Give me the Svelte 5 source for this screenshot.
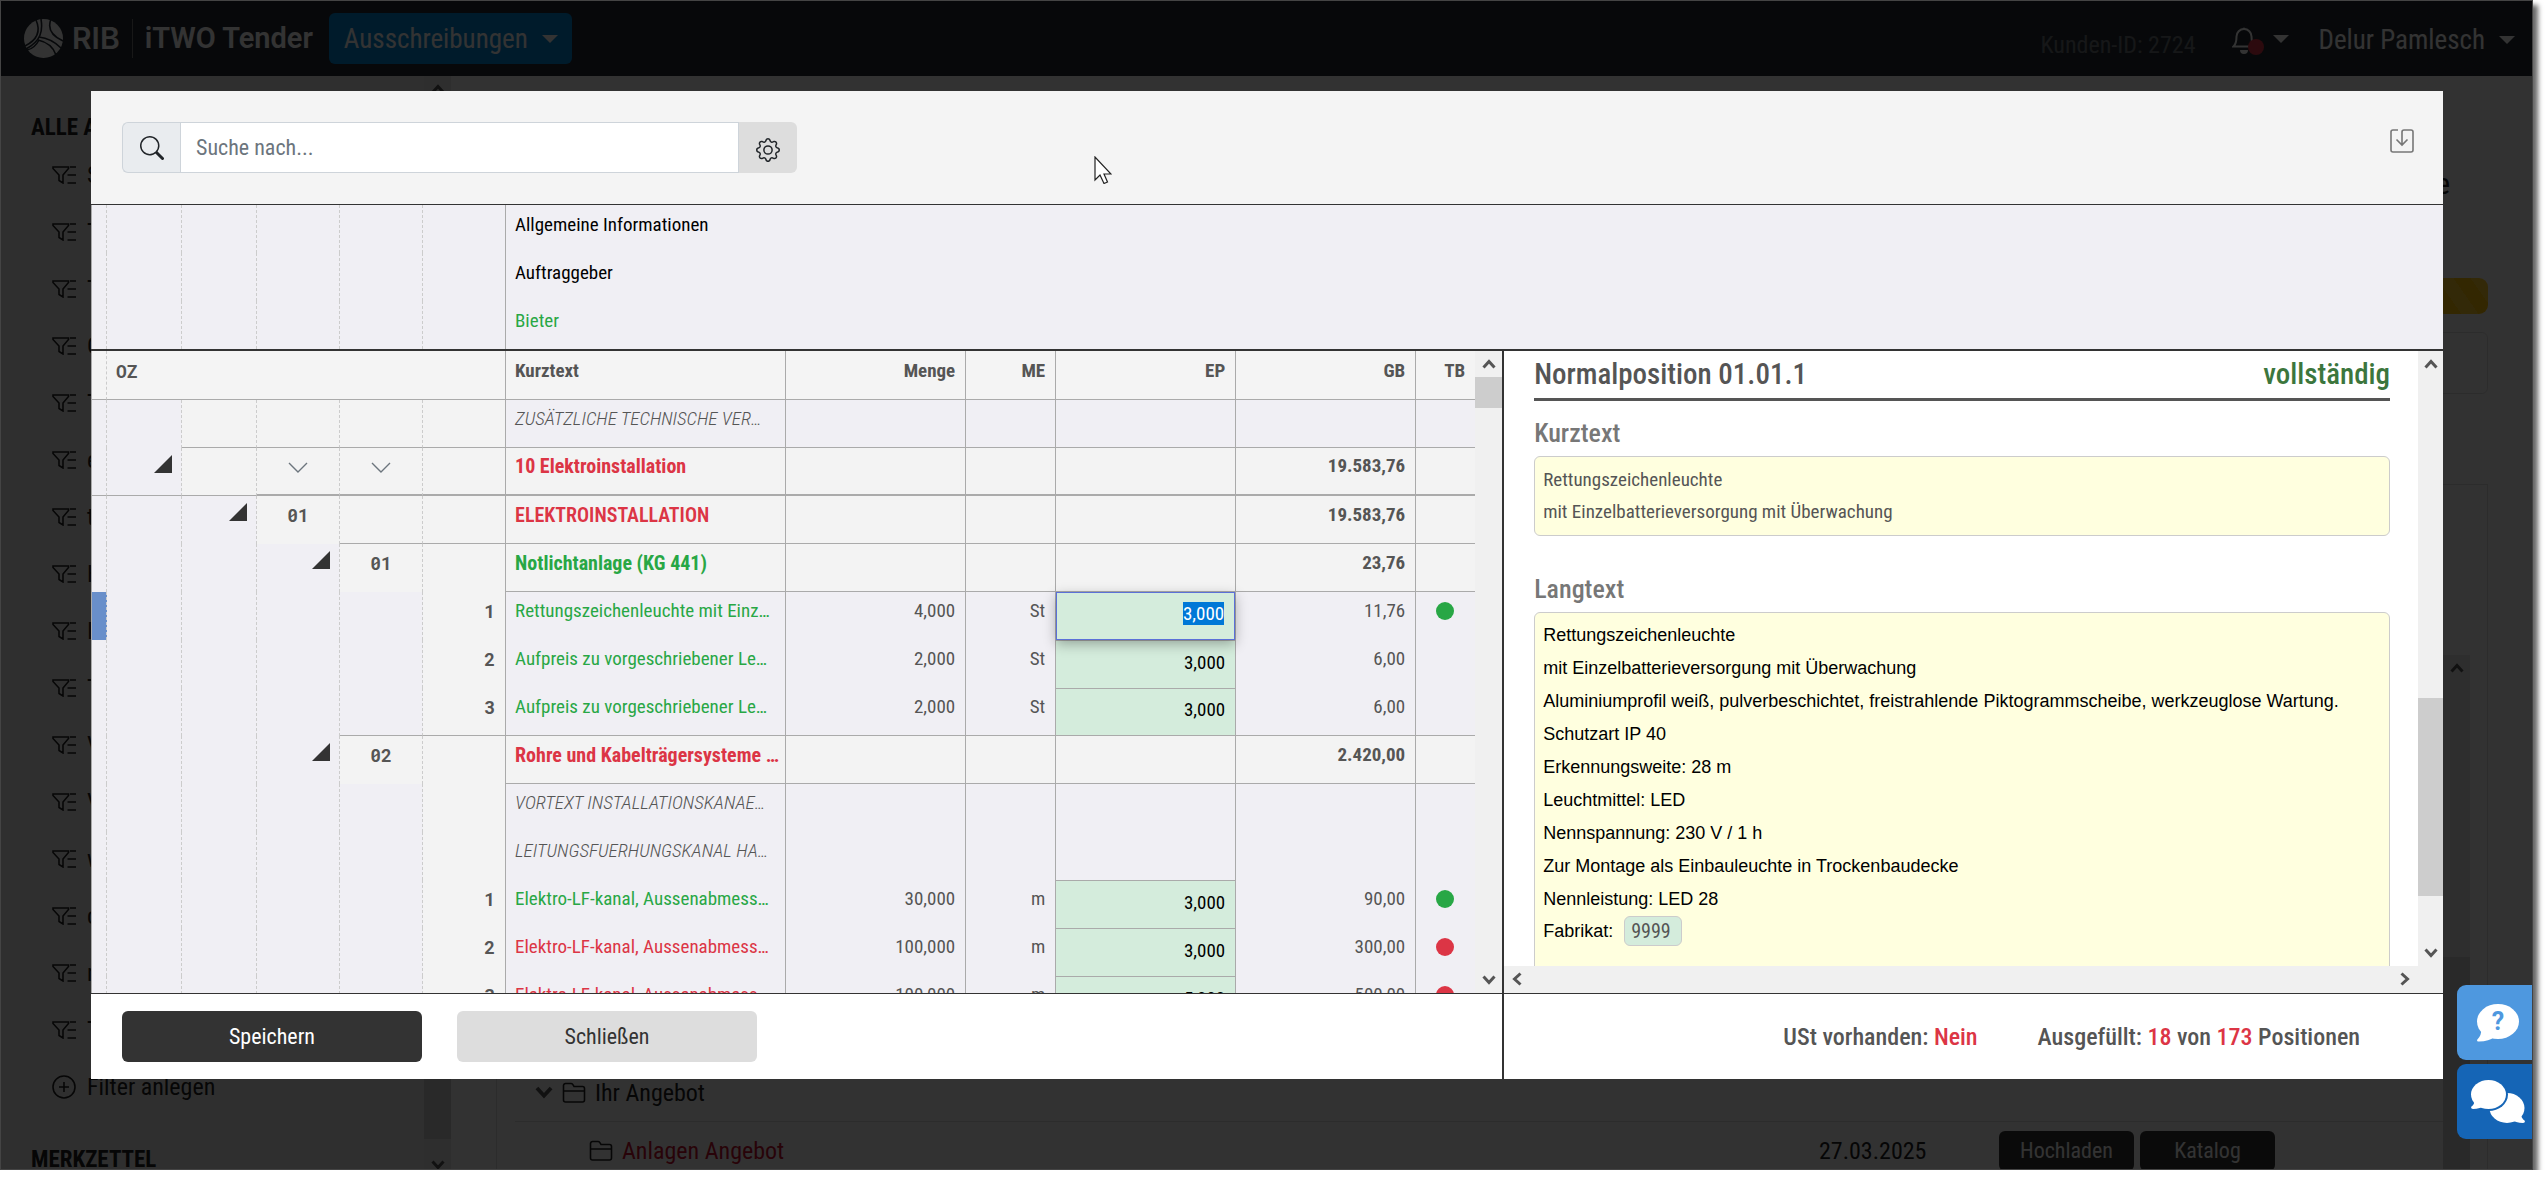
<script>
    import { onMount } from 'svelte';

    let search = $state('');
    let fabrikat = $state('9999');
    let activeInput = $state(null);

    const filters = ['S', 'T', 'T', 'G', 'T', 'e', 't', 'H', 'I', 'T', 'V', 'V', 'w', 'c', 'r', 'T'];

    const infoRows = [
        { text: 'Allgemeine Informationen' },
        { text: 'Auftraggeber' },
        { text: 'Bieter', done: true },
    ];

    // level: depth of the title, item: position with a price, note: free text
    let rows = $state([
        { type: 'note', level: 1, text: 'ZUSÄTZLICHE TECHNISCHE VER…', line: 2 },
        { type: 'title', level: 1, text: '10 Elektroinstallation', state: 'open', gb: '19.583,76', line: 0 },
        { type: 'title', level: 2, oz: '01', text: 'ELEKTROINSTALLATION', state: 'open', gb: '19.583,76', line: 4 },
        { type: 'title', level: 3, oz: '01', text: 'Notlichtanlage (KG 441)', state: 'done', gb: '23,76', line: 6 },
        { type: 'item', level: 4, oz: '1', text: 'Rettungszeichenleuchte mit Einz…', state: 'done', menge: '4,000', me: 'St', ep: '3,000', gb: '11,76', dot: 'done', active: true },
        { type: 'item', level: 4, oz: '2', text: 'Aufpreis zu vorgeschriebener Le…', state: 'done', menge: '2,000', me: 'St', ep: '3,000', gb: '6,00' },
        { type: 'item', level: 4, oz: '3', text: 'Aufpreis zu vorgeschriebener Le…', state: 'done', menge: '2,000', me: 'St', ep: '3,000', gb: '6,00', line: 4 },
        { type: 'title', level: 3, oz: '02', text: 'Rohre und Kabelträgersysteme …', state: 'open', gb: '2.420,00', line: 6 },
        { type: 'note', level: 4, text: 'VORTEXT INSTALLATIONSKANAE…' },
        { type: 'note', level: 4, text: 'LEITUNGSFUERHUNGSKANAL HA…' },
        { type: 'item', level: 4, oz: '1', text: 'Elektro-LF-kanal, Aussenabmess…', state: 'done', menge: '30,000', me: 'm', ep: '3,000', gb: '90,00', dot: 'done' },
        { type: 'item', level: 4, oz: '2', text: 'Elektro-LF-kanal, Aussenabmess…', state: 'open', menge: '100,000', me: 'm', ep: '3,000', gb: '300,00', dot: 'open' },
        { type: 'item', level: 4, oz: '3', text: 'Elektro-LF-kanal, Aussenabmess…', state: 'open', menge: '100,000', me: 'm', ep: '5,000', gb: '500,00', dot: 'open' },
    ]);

    const langtext = [
        'Rettungszeichenleuchte',
        'mit Einzelbatterieversorgung mit Überwachung',
        'Aluminiumprofil weiß, pulverbeschichtet, freistrahlende Piktogrammscheibe, werkzeuglose Wartung.',
        'Schutzart IP 40',
        'Erkennungsweite: 28 m',
        'Leuchtmittel: LED',
        'Nennspannung: 230 V / 1 h',
        'Zur Montage als Einbauleuchte in Trockenbaudecke',
        'Nennleistung: LED 28',
    ];

    function keepActive(node, active) {
        if (active) activeInput = node;
    }

    onMount(() => {
        activeInput?.focus();
        activeInput?.select();
    });
</script>

{#snippet chevron(dir)}
    <svg class="scroll-chevron {dir}" viewBox="0 0 14 10" aria-hidden="true"><path d="M1.5 8.5 7 2.5l5.5 6" /></svg>
{/snippet}

{#snippet scrollbar(before, thumb, after)}
    <div class="scrollbar">
        <button class="scroll-button" aria-label="Nach oben">{@render chevron('up')}</button>
        <div style="flex: {before} 0 0"></div>
        <div class="thumb" style="flex: {thumb} 0 0"></div>
        <div style="flex: {after} 0 0"></div>
        <button class="scroll-button" aria-label="Nach unten">{@render chevron('down')}</button>
    </div>
{/snippet}

{#snippet folder()}
    <svg class="folder" viewBox="0 0 24 21" aria-hidden="true">
        <path d="M1.5 18V3.5a2 2 0 0 1 2-2H9a2 2 0 0 1 1.700.9L12 4.500h8.500a2 2 0 0 1 2 2V18a2 2 0 0 1-2 2h-17a2 2 0 0 1-2-2zM1.500 9h21" />
    </svg>
{/snippet}

{#snippet gridColumns()}
    <colgroup>
        <col class="w-marker" /><col class="w-level" /><col class="w-level" />
        <col class="w-oz" /><col class="w-oz" /><col class="w-oz" /><col />
        <col class="w-wide" /><col class="w-me" /><col class="w-wide" /><col class="w-wide" /><col class="w-tb" />
    </colgroup>
{/snippet}

<div class="window">
    <header class="topbar">
        <svg class="logo" viewBox="0 0 39 39" aria-hidden="true">
            <circle cx="19.5" cy="19.5" r="19.5" fill="#fff" />
            <g fill="none" stroke="#232c35" stroke-width="1.6">
                <path d="M12 1c4 9 3 19-11 26" />
                <path d="M17 0c2 12 0 22-15 30" />
                <path d="M27 0c-4 10 1 17 12 22" />
                <path d="M15 18c9 1 17 6 22 11" />
                <path d="M14 21c9 2 15 6 18 15" />
                <path d="M3 31c5-1 9-4 12-10" />
            </g>
        </svg>
        <span class="brand">RIB</span>
        <span class="product">iTWO Tender</span>
        <button class="area-menu">Ausschreibungen <span class="caret"></span></button>
        <span class="customer">Kunden-ID: 2724</span>
        <button class="bell" aria-label="Benachrichtigungen">
            <svg viewBox="0 0 24 28" aria-hidden="true">
                <path d="M1.5 20.5h21c-2-2-3-5-3-10a7.500 7.500 0 0 0-15 0c0 5-1 8-3 10z" fill="none" stroke="#fff" stroke-width="2" />
                <path d="M8 24h8a4 4 0 0 1-8 0zM10.500 3a1.500 1.500 0 1 1 3 0z" fill="#fff" />
            </svg>
            <span class="badge"></span>
        </button>
        <span class="caret"></span>
        <button class="user">Delur Pamlesch <span class="caret"></span></button>
    </header>

    <div class="page">
        <nav class="sidebar">
            <div class="sidebar-content">
                <h2>ALLE A</h2>
                <ul>
                    {#each filters as name}
                        <li>
                            <svg class="funnel" viewBox="0 0 24 18" aria-hidden="true"><path d="M1 1h15.500v1.500L11 9v8l-4-2.500V9L1 2.500zM18 1h6M15.500 9H24M15.500 17H24" /></svg>
                            {name}
                        </li>
                    {/each}
                    <li>
                        <svg class="plus" viewBox="0 0 24 24" aria-hidden="true"><circle cx="12" cy="12" r="11" /><path d="M12 7v10M7 12h10" /></svg>
                        Filter anlegen
                    </li>
                </ul>
                <h2 class="notes">MERKZETTEL</h2>
            </div>
            {@render scrollbar(50, 965, 13)}
        </nav>

        <main>
            <h1>e</h1>
            <div class="progress"></div>
            <div class="card"></div>
            <div class="card files">
                <div class="tree">
                    <div class="tree-row">
                        <div class="tree-name">{@render chevron('down')} {@render folder()} Ihr Angebot</div>
                    </div>
                    <div class="tree-row">
                        <a class="tree-name nested" href="#anlagen">{@render folder()} Anlagen Angebot</a>
                        <span class="date">27.03.2025</span>
                        <div class="tree-actions">
                            <button>Hochladen</button>
                            <button>Katalog</button>
                        </div>
                    </div>
                </div>
                {@render scrollbar(276, 217, 0)}
            </div>
        </main>
    </div>

    <div class="backdrop">
        <div class="modal" role="dialog" aria-label="Leistungsverzeichnis">
            <header class="modal-header">
                <div class="search">
                    <label for="search" aria-label="Suche">
                        <svg viewBox="0 0 16 16" aria-hidden="true"><path d="M11.742 10.344a6.500 6.500 0 1 0-1.397 1.398h-.001q.044.060.098.115l3.850 3.850a1 1 0 0 0 1.415-1.414l-3.850-3.850a1 1 0 0 0-.115-.1zM12 6.500a5.500 5.500 0 1 1-11 0 5.500 5.500 0 0 1 11 0" /></svg>
                    </label>
                    <input id="search" type="text" placeholder="Suche nach..." bind:value={search} />
                    <button aria-label="Sucheinstellungen">
                        <svg viewBox="0 0 16 16" aria-hidden="true">
                            <path d="M8 4.754a3.246 3.246 0 1 0 0 6.492 3.246 3.246 0 0 0 0-6.492M5.754 8a2.246 2.246 0 1 1 4.492 0 2.246 2.246 0 0 1-4.492 0" />
                            <path d="M9.796 1.343c-.527-1.790-3.065-1.790-3.592 0l-.094.319a.873.873 0 0 1-1.255.520l-.292-.160c-1.640-.892-3.433.902-2.540 2.541l.159.292a.873.873 0 0 1-.520 1.255l-.319.094c-1.790.527-1.790 3.065 0 3.592l.319.094a.873.873 0 0 1 .520 1.255l-.160.292c-.892 1.640.901 3.434 2.541 2.540l.292-.159a.873.873 0 0 1 1.255.520l.094.319c.527 1.790 3.065 1.790 3.592 0l.094-.319a.873.873 0 0 1 1.255-.520l.292.160c1.640.893 3.434-.902 2.540-2.541l-.159-.292a.873.873 0 0 1 .520-1.255l.319-.094c1.790-.527 1.790-3.065 0-3.592l-.319-.094a.873.873 0 0 1-.520-1.255l.160-.292c.893-1.640-.902-3.433-2.541-2.540l-.292.159a.873.873 0 0 1-1.255-.520zm-2.633.283c.246-.835 1.428-.835 1.674 0l.094.319a1.873 1.873 0 0 0 2.693 1.115l.291-.160c.764-.415 1.600.420 1.184 1.185l-.159.292a1.873 1.873 0 0 0 1.116 2.692l.318.094c.835.246.835 1.428 0 1.674l-.319.094a1.873 1.873 0 0 0-1.115 2.693l.160.291c.415.764-.420 1.600-1.185 1.184l-.291-.159a1.873 1.873 0 0 0-2.693 1.116l-.094.318c-.246.835-1.428.835-1.674 0l-.094-.319a1.873 1.873 0 0 0-2.692-1.115l-.292.160c-.764.415-1.600-.420-1.184-1.185l.159-.291A1.873 1.873 0 0 0 1.945 8.930l-.319-.094c-.835-.246-.835-1.428 0-1.674l.319-.094A1.873 1.873 0 0 0 3.060 4.377l-.160-.292c-.415-.764.420-1.600 1.185-1.184l.292.159a1.873 1.873 0 0 0 2.692-1.115z" />
                        </svg>
                    </button>
                </div>
                <button class="download" aria-label="Herunterladen">
                    <svg viewBox="0 0 24 24" aria-hidden="true">
                        <path d="M8 1H3a2 2 0 0 0-2 2v18a2 2 0 0 0 2 2h18a2 2 0 0 0 2-2V3a2 2 0 0 0-2-2h-7a2 2 0 0 0-2 2v13M6.500 10.500 12 16l5.500-5.500" />
                    </svg>
                </button>
                <svg class="pointer" viewBox="0 0 18 28" aria-hidden="true"><path d="M1 1v23l5-5 4 8.500 3.500-1.500-3.500-8H17z" fill="#fff" stroke="#222" stroke-width="1.2" /></svg>
            </header>

            <table class="info">
                <colgroup>
                    <col class="w-marker" /><col class="w-level" /><col class="w-level" />
                    <col class="w-oz" /><col class="w-oz" /><col class="w-oz" /><col />
                </colgroup>
                <tbody>
                    {#each infoRows as row}
                        <tr>
                            <td class="marker"></td>
                            <td class="guide"></td><td class="guide"></td><td class="guide"></td><td class="guide"></td>
                            <td></td>
                            <td class="info-text" class:done={row.done}>{row.text}</td>
                        </tr>
                    {/each}
                </tbody>
            </table>

            <div class="panes">
                <section class="positions">
                    <div class="table-clip">
                        <table>
                            {@render gridColumns()}
                            <thead>
                                <tr>
                                    <th class="marker"></th>
                                    <th class="mono" colspan="5">OZ</th>
                                    <th>Kurztext</th>
                                    <th class="num">Menge</th>
                                    <th class="num">ME</th>
                                    <th class="num">EP</th>
                                    <th class="num">GB</th>
                                    <th class="num last">TB</th>
                                </tr>
                            </thead>
                            <tbody>
                                {#each rows as row, i}
                                    <tr class={row.type} class:heavy={i === 1}>
                                        <td class="marker" class:current={row.active} class:line={row.line === 0}></td>
                                        {#each [1, 2, 3, 4, 5] as col}
                                            <td
                                                class="oz"
                                                class:guide={col < 5}
                                                class:raised={col > row.level}
                                                class:line={row.line !== undefined && col >= row.line}
                                                class:thin={i === 1 && col < 3}
                                                class:number={row.type === 'item' && col === 5}
                                                class:toggle={row.type === 'title' && col === row.level}
                                            >
                                                {#if row.type === 'title' && col === row.level}
                                                    <button class="collapse" aria-label="Zuklappen"></button>
                                                {:else if i === 1 && (col === 3 || col === 4)}
                                                    <button class="expand-all" aria-label="Ebene aufklappen">
                                                        <svg viewBox="0 0 20 11" aria-hidden="true"><path d="M1 1l9 9 9-9" /></svg>
                                                    </button>
                                                {:else if row.oz && col === row.level + 1}
                                                    {row.oz}
                                                {/if}
                                            </td>
                                        {/each}
                                        <td class="text {row.state ?? ''}" class:line={row.line !== undefined} class:semi={i === 2}>{row.text}</td>
                                        <td class="num" class:line={row.line !== undefined}>{row.menge ?? ''}</td>
                                        <td class="num" class:line={row.line !== undefined}>{row.me ?? ''}</td>
                                        <td class="num ep" class:line={row.line !== undefined}>
                                            {#if row.ep}
                                                <input
                                                    type="text"
                                                    class:active={row.active}
                                                    aria-label="EP {row.text}"
                                                    bind:value={row.ep}
                                                    use:keepActive={row.active}
                                                />
                                            {/if}
                                        </td>
                                        <td class="num" class:line={row.line !== undefined}>{row.gb ?? ''}</td>
                                        <td class="last" class:line={row.line !== undefined}>
                                            {#if row.dot}<span class="dot {row.dot}"></span>{/if}
                                        </td>
                                    </tr>
                                {/each}
                            </tbody>
                        </table>
                    </div>
                    {@render scrollbar(0, 31, 559)}
                </section>

                <section class="details">
                    <div class="details-main">
                        <div class="details-content">
                            <div class="details-title">
                                <h2>Normalposition 01.01.1</h2>
                                <span>vollständig</span>
                            </div>
                            <h3>Kurztext</h3>
                            <div class="box">
                                Rettungszeichenleuchte<br />mit Einzelbatterieversorgung mit Überwachung
                            </div>
                            <h3 class="second">Langtext</h3>
                            <div class="box long">
                                {#each langtext as line}
                                    <p>{line}</p>
                                {/each}
                                <p class="field">
                                    <label for="fabrikat">Fabrikat:</label>
                                    <input id="fabrikat" type="text" bind:value={fabrikat} />
                                </p>
                            </div>
                        </div>
                        {@render scrollbar(321, 198, 44)}
                    </div>
                    <div class="scrollbar-x">
                        <button class="scroll-button" aria-label="Nach links">{@render chevron('left')}</button>
                        <button class="scroll-button" aria-label="Nach rechts">{@render chevron('right')}</button>
                    </div>
                </section>
            </div>

            <footer class="modal-footer">
                <div class="footer-actions">
                    <button class="save">Speichern</button>
                    <button class="close">Schließen</button>
                </div>
                <div class="footer-status">
                    <span>USt vorhanden: <b>Nein</b></span>
                    <span>Ausgefüllt: <b>18</b> von <b>173</b> Positionen</span>
                </div>
            </footer>
        </div>
    </div>

    <div class="help">
        <button aria-label="Hilfe">
            <svg width="42" height="38" viewBox="0 0 42 38">
                <ellipse cx="21" cy="17.5" rx="21" ry="17.5" fill="#fff" />
                <path d="M4 25q1 6-4 11 0 2 2 1.500 10 0 16-5z" fill="#fff" />
                <text x="21" y="26" text-anchor="middle">?</text>
            </svg>
        </button>
        <button class="chat" aria-label="Chat">
            <svg width="54" height="44" viewBox="0 0 54 44">
                <g fill="#fff">
                    <ellipse cx="36" cy="28" rx="17.5" ry="15" />
                    <path d="M50 34q0 4 4 7 0 2-2 2-7 0-13-4z" />
                </g>
                <ellipse cx="17.5" cy="14.5" rx="19.5" ry="16.5" fill="#1565b6" />
                <g fill="#fff">
                    <ellipse cx="17.5" cy="14.5" rx="17.5" ry="14.5" />
                    <path d="M3 21q1 3-3 6 0 2 2 2 7 0 13-4z" />
                </g>
            </svg>
        </button>
    </div>
</div>

<style>
    :global(body) {
        margin: 0;
        background: #fff;
        font-family: 'Roboto Condensed', Roboto, sans-serif;
        font-size: 24px;
    }

    * {
        box-sizing: border-box;
    }

    button,
    input {
        font: inherit;
        border: none;
        margin: 0;
        padding: 0;
        background: none;
        color: inherit;
    }

    h1,
    h2,
    h3,
    p,
    ul {
        margin: 0;
        padding: 0;
    }

    .window {
        position: relative;
        display: flex;
        flex-direction: column;
        height: calc(100vh - 15px);
        margin-right: 15px;
        border: 1px solid #444;
        background: #fafafa;
        box-shadow: 5px 5px 5px rgba(0, 0, 0, 0.6);
    }

    /* top bar */
    .topbar {
        display: flex;
        align-items: center;
        flex: none;
        height: 75px;
        padding: 0 17px 0 23px;
        background: #232c35;
        color: #fff;
    }

    .logo {
        width: 39px;
        height: 39px;
    }

    .brand {
        margin-left: 9px;
        padding-right: 12px;
        border-right: 1px solid #777;
        font: 600 30px/39px Inter, sans-serif;
    }

    .product {
        margin: 0 16px 0 12px;
        font: 600 29px/39px Roboto, sans-serif;
    }

    .area-menu {
        display: flex;
        align-items: center;
        gap: 14px;
        height: 51px;
        padding: 0 14px 0 15px;
        border-radius: 6px;
        background: #0087d7;
        font-size: 27px;
    }

    .caret {
        border: 8px solid transparent;
        border-top-color: currentColor;
        border-bottom: none;
    }

    .customer {
        margin-left: auto;
        padding-top: 12px;
        color: #70757a;
    }

    .bell {
        position: relative;
        display: flex;
        margin: 3px 17px 0 36px;
    }

    .bell svg {
        width: 24px;
        height: 28px;
    }

    .badge {
        position: absolute;
        right: -8px;
        bottom: -1px;
        width: 16px;
        height: 16px;
        border-radius: 50%;
        background: #dc3545;
    }

    .user {
        display: flex;
        align-items: center;
        gap: 14px;
        margin-left: 30px;
        padding-top: 3px;
        font-size: 27px;
    }

    /* page behind the dialog */
    .page {
        display: flex;
        flex: 1;
        min-height: 0;
        overflow: hidden;
        color: #222;
    }

    .sidebar {
        display: flex;
        flex: none;
        width: 450px;
        margin-bottom: -9px;
        background: #ebebeb;
        overflow: hidden;
    }

    .sidebar-content {
        flex: 1;
        overflow: hidden;
    }

    .sidebar h2 {
        margin: 40px 0 6px 30px;
        font-size: 23px;
        line-height: 24px;
    }

    .sidebar h2.notes {
        margin-top: 33px;
    }

    .sidebar ul {
        list-style: none;
        padding-left: 51px;
    }

    .sidebar li {
        display: flex;
        align-items: center;
        gap: 11px;
        height: 57px;
    }

    .funnel,
    .plus,
    .folder {
        flex: none;
        width: 24px;
        fill: none;
        stroke: #222;
        stroke-width: 1.6;
    }

    main {
        display: flex;
        flex: 1;
        flex-direction: column;
        min-width: 0;
        padding: 0 44px 0 45px;
    }

    h1 {
        margin: 88px 38px 0 0;
        font-size: 30px;
        line-height: 40px;
        font-weight: 400;
        text-align: right;
    }

    .progress {
        flex: none;
        height: 36px;
        margin-top: 74px;
        border-radius: 9px;
        background: repeating-linear-gradient(55deg, #ffc107 0 14px, #ffca2c 14px 28px);
    }

    .card {
        flex: none;
        height: 62px;
        margin-top: 18px;
        border: 1px solid #ddd;
        border-radius: 6px;
    }

    .card.files {
        display: flex;
        flex: 1;
        min-height: 0;
        margin: 90px 0 -11px;
        padding: 170px 17px 0 18px;
        border-bottom: none;
        border-radius: 0;
    }

    .card.files .scrollbar {
        margin-bottom: -20px;
    }

    .tree {
        display: flex;
        flex: 1;
        flex-direction: column;
        justify-content: flex-end;
    }

    .tree-row {
        display: grid;
        grid-template-columns: 1fr 180px 444px;
        align-items: center;
        height: 58px;
        border-bottom: 1px solid #ddd;
    }

    .tree-name {
        display: flex;
        align-items: center;
        gap: 9px;
        padding-left: 20px;
        color: #222;
        text-decoration: none;
    }

    .tree-name .scroll-chevron {
        width: 18px;
        height: 13px;
    }

    .tree-name.nested {
        padding-left: 74px;
        color: #c8102e;
    }

    .tree-actions {
        display: flex;
        gap: 6px;
    }

    .tree-actions button {
        width: 135px;
        height: 40px;
        border-radius: 6px;
        background: #333;
        color: #fff;
        font-size: 22px;
    }

    /* scroll bars */
    .scrollbar {
        display: flex;
        flex: none;
        flex-direction: column;
        width: 27px;
        background: #f0f0f0;
    }

    .sidebar .scrollbar,
    .files .scrollbar {
        background: #e6e6e6;
    }

    .scroll-button {
        display: flex;
        align-items: center;
        justify-content: center;
        flex: none;
        width: 100%;
        height: 26px;
    }

    .scroll-chevron {
        width: 14px;
        height: 10px;
        fill: none;
        stroke: #555;
        stroke-width: 3;
    }

    .scroll-chevron.down {
        transform: rotate(180deg);
    }

    .scroll-chevron.left {
        transform: rotate(-90deg);
    }

    .scroll-chevron.right {
        transform: rotate(90deg);
    }

    .thumb {
        background: #cdcdcd;
    }

    .scrollbar-x {
        display: flex;
        justify-content: space-between;
        flex: none;
        height: 27px;
        padding-right: 25px;
        background: #f0f0f0;
    }

    .scrollbar-x .scroll-button {
        width: 26px;
    }

    /* dialog */
    .backdrop {
        position: absolute;
        inset: 0;
        display: flex;
        padding: 90px 89px 90px 90px;
        background: rgba(0, 0, 0, 0.8);
    }

    .modal {
        display: flex;
        flex: 1;
        flex-direction: column;
        min-width: 0;
        background: #fff;
        color: #555;
        font-size: 22px;
    }

    .modal-header {
        position: relative;
        display: flex;
        justify-content: space-between;
        flex: none;
        height: 114px;
        padding: 31px 29px 31px 31px;
        border-bottom: 1px solid #333;
        background: #f4f4f4;
    }

    .search {
        display: flex;
        width: 675px;
    }

    .search label,
    .search button {
        display: flex;
        align-items: center;
        justify-content: center;
        width: 58px;
        border: 1px solid #ced4da;
        border-right: none;
        border-radius: 6px 0 0 6px;
        background: #e9ecef;
    }

    .search button {
        border: none;
        border-radius: 0 6px 6px 0;
        background: #ddd;
        padding-top: 5px;
    }

    .search svg {
        width: 24px;
        height: 24px;
        fill: #212529;
    }

    .search input {
        flex: 1;
        min-width: 0;
        padding: 0 15px;
        border: 1px solid #ced4da;
        background: #fff;
    }

    .search input::placeholder {
        color: #6c757d;
        opacity: 1;
    }

    .download {
        display: flex;
        align-self: flex-start;
        margin-top: 7px;
    }

    .download svg {
        width: 24px;
        height: 24px;
        fill: none;
        stroke: #777;
        stroke-width: 1.6;
    }

    .pointer {
        position: absolute;
        left: 1003px;
        top: 65px;
        width: 18px;
        height: 28px;
    }

    table {
        width: 100%;
        table-layout: fixed;
        border-collapse: separate;
        border-spacing: 0;
        font-size: 19px;
        line-height: 24px;
    }

    .w-marker {
        width: 16px;
    }

    .w-level {
        width: 75px;
    }

    .w-oz {
        width: 83px;
    }

    .w-wide {
        width: 180px;
    }

    .w-me {
        width: 90px;
    }

    .w-tb {
        width: 59px;
    }

    th,
    td {
        height: 48px;
        padding: 0 10px 10px 9px;
        border-right: 1px solid #aaa;
        background: #f0eff4;
        text-align: left;
        white-space: nowrap;
        overflow: hidden;
    }

    th {
        height: 49px;
        padding-bottom: 8px;
        border-bottom: 1px solid #aaa;
        background: #f4f4f4;
        font-weight: 700;
    }

    .mono,
    .oz {
        font-family: 'Roboto Mono', 'DejaVu Sans Mono', monospace;
        font-size: 18px;
        font-weight: 700;
    }

    .marker {
        padding: 0;
        border-left: 1px solid #aaa;
        border-right: 1px dashed #ccc;
    }

    .marker.current {
        background: #698fca;
    }

    .guide {
        border-right: 1px dashed #ccc;
    }

    .last {
        border-right: none;
        text-align: center;
    }

    .num {
        text-align: right;
    }

    .oz {
        padding: 0 0 10px;
        text-align: center;
    }

    .oz.number {
        padding-right: 10px;
        text-align: right;
    }

    .raised,
    .title .text,
    .title .num,
    .title .last {
        background: #f3f3f3;
    }

    .line {
        border-bottom: 1px solid #aaa;
    }

    .heavy .line {
        border-bottom-width: 2px;
    }

    .heavy .line.thin,
    .heavy .marker.line {
        border-bottom-width: 1px;
    }

    .oz.toggle {
        padding: 7px 9px 0 0;
        text-align: right;
        vertical-align: top;
    }

    .collapse {
        display: block;
        width: 18px;
        height: 18px;
        margin-left: auto;
        background: #333;
        clip-path: polygon(100% 0, 100% 100%, 0 100%);
    }

    .expand-all svg {
        width: 20px;
        height: 11px;
        fill: none;
        stroke: #6c757d;
        stroke-width: 1.4;
    }

    .title .text,
    .title .num {
        font-weight: 700;
    }

    .title .text {
        font-size: 20px;
    }

    .title .text.semi {
        font-weight: 600;
    }

    .note .text {
        font-style: italic;
        font-weight: 300;
    }

    .text.done,
    .info-text.done {
        color: #28a745;
    }

    .text.open {
        color: #dc3545;
    }

    .info {
        flex: none;
    }

    .info-text {
        padding-bottom: 8px;
        border-right: none;
        color: #000;
    }

    .ep {
        padding: 0;
        overflow: visible;
    }

    .ep input {
        display: block;
        width: 100%;
        height: 48px;
        padding: 0 10px 5px;
        border-top: 1px solid #aaa;
        background: #d4ecdc;
        color: #000;
        text-align: right;
        outline: none;
    }

    .ep.line input {
        height: 47px;
    }

    .ep input.active {
        position: relative;
        border: 1px solid #5b70d8;
        box-shadow: 0 4px 12px rgba(0, 0, 0, 0.3);
    }

    .ep input::selection {
        background: #0078d7;
        color: #fff;
    }

    .dot {
        display: block;
        width: 18px;
        height: 18px;
        margin: 0 auto;
        border-radius: 50%;
        background: #dc3545;
    }

    .dot.done {
        background: #28a745;
    }

    .panes {
        display: flex;
        flex: 1;
        min-height: 0;
        border-top: 2px solid #333;
        border-bottom: 1px solid #333;
    }

    .positions {
        display: flex;
        flex: none;
        width: 60%;
        background: #f0eff4;
        overflow: hidden;
    }

    .table-clip {
        flex: 1;
        min-width: 0;
        overflow: hidden;
    }

    .details {
        display: flex;
        flex: 1;
        flex-direction: column;
        min-width: 0;
        border-left: 2px solid #333;
    }

    .details-main {
        display: flex;
        flex: 1;
        min-height: 0;
    }

    .details-main .scrollbar {
        width: 25px;
    }

    .details-content {
        flex: 1;
        min-width: 0;
        padding: 0 28px 0 30px;
        overflow: hidden;
    }

    .details-title {
        display: flex;
        justify-content: space-between;
        border-bottom: 3px solid #555;
        font-size: 29px;
        font-weight: 500;
        line-height: 47px;
    }

    .details-title h2 {
        font: inherit;
    }

    .details-title span {
        color: #3c763d;
    }

    h3 {
        margin: 14px 0 5px;
        color: #777;
        font-size: 26px;
        font-weight: 500;
        line-height: 36px;
    }

    h3.second {
        margin-top: 35px;
    }

    .box {
        padding: 7px 8px;
        border: 1px solid #ccc;
        border-radius: 6px;
        background: #ffffdf;
        font-size: 19px;
        line-height: 32px;
    }

    .box.long {
        min-height: 400px;
        padding-top: 6px;
        color: #000;
        font-family: 'Liberation Sans', Arial, sans-serif;
        font-size: 18px;
        line-height: 33px;
    }

    .field {
        display: flex;
        align-items: center;
        gap: 11px;
        height: 30px;
    }

    .field input {
        width: 58px;
        height: 30px;
        padding: 0 6px;
        border: 1px solid #ccc;
        border-radius: 6px;
        background: #d4ecdc;
        color: #555;
        font-family: 'Roboto Condensed', Roboto, sans-serif;
        font-size: 20px;
    }

    .modal-footer {
        display: flex;
        flex: none;
        height: 85px;
    }

    .footer-actions {
        display: flex;
        gap: 35px;
        width: 60%;
        padding: 17px 31px;
    }

    .footer-actions button {
        width: 300px;
        height: 51px;
        border-radius: 6px;
        background: #ddd;
        color: #333;
    }

    .footer-actions .save {
        background: #333;
        color: #fff;
    }

    .footer-status {
        display: flex;
        align-items: center;
        justify-content: flex-end;
        gap: 60px;
        flex: 1;
        padding-right: 83px;
        border-left: 2px solid #333;
        font-size: 24px;
        font-weight: 500;
    }

    .footer-status b {
        color: #dc3545;
        font-weight: 500;
    }

    /* floating help buttons */
    .help {
        position: absolute;
        right: 0;
        bottom: 30px;
        display: flex;
        flex-direction: column;
        gap: 4px;
    }

    .help button {
        display: flex;
        align-items: center;
        justify-content: center;
        width: 75px;
        height: 75px;
        padding-left: 6px;
        border-radius: 9px 0 0 9px;
        background: #4e98df;
    }

    .help .chat {
        background: #1565b6;
    }

    .help text {
        fill: #4e98df;
        font: 700 25px Roboto, sans-serif;
    }
</style>
